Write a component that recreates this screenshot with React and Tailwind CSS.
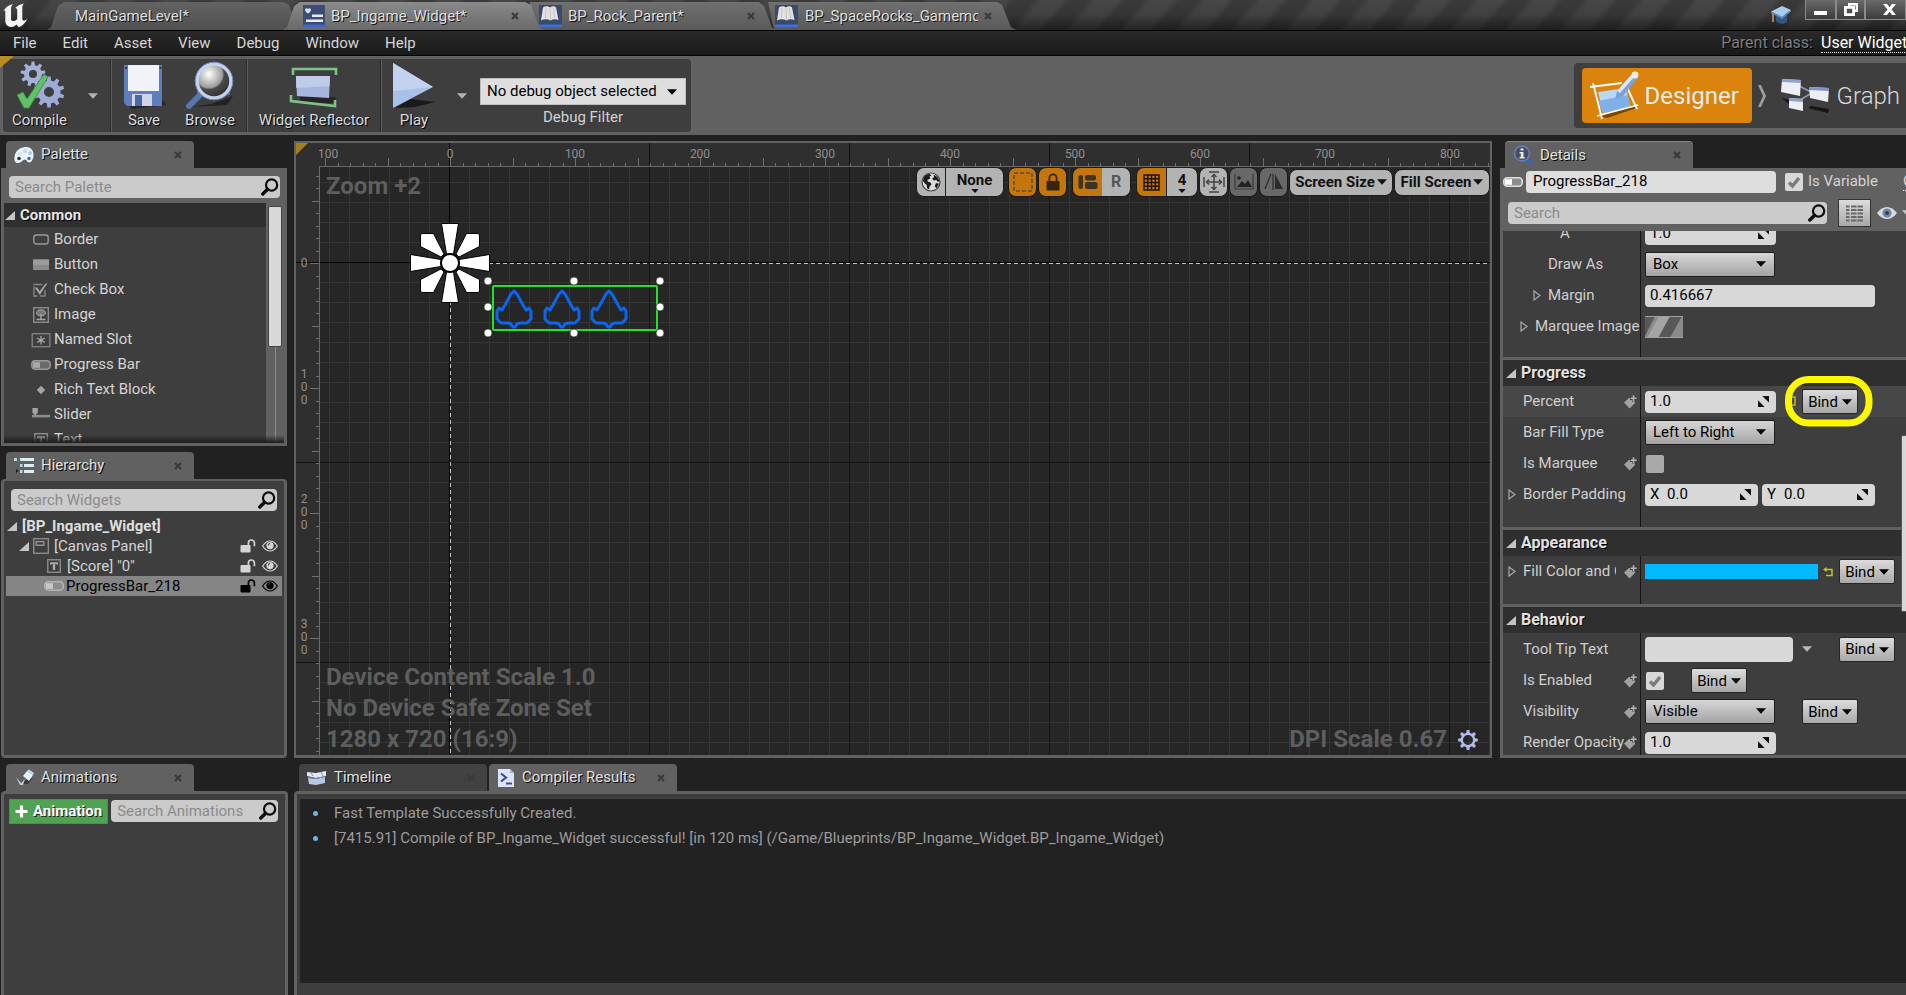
import React from "react";

const range = (n, from = 0) => Array.from({ length: n }, (_, i) => i + from);

/* ---------- small shared glyphs ---------- */

const Caret = ({ className = "" }) => (
  <svg viewBox="0 0 10 6" className={"h-[6px] w-[10px] shrink-0 fill-current " + className} aria-hidden="true">
    <path d="M0 0.3h10L5 5.8z" />
  </svg>
);

const Close = () => (
  <svg viewBox="0 0 8 8" className="h-2 w-2 text-[#3a3a3a]" aria-hidden="true">
    <path d="M1 1l6 6M7 1L1 7" stroke="currentColor" strokeWidth="2.2" />
  </svg>
);

const Expanded = ({ className = "" }) => (
  <svg viewBox="0 0 10 9" className={"h-[9px] w-[10px] shrink-0 fill-[#c4c4c4] " + className} aria-hidden="true">
    <path d="M10 0v9H0z" />
  </svg>
);

const Collapsed = () => (
  <svg viewBox="0 0 8 11" className="h-[11px] w-2 shrink-0" aria-hidden="true">
    <path d="M1 1l6 4.5L1 10z" fill="none" stroke="#a8a8a8" strokeWidth="1.2" />
  </svg>
);

const Magnifier = () => (
  <svg viewBox="0 0 18 18" className="h-[18px] w-[18px] shrink-0" aria-hidden="true">
    <circle cx="10.6" cy="7" r="5.6" fill="none" stroke="#0b0b0b" strokeWidth="2.2" />
    <path d="M6.6 11.2L1.8 16" stroke="#0b0b0b" strokeWidth="3.4" strokeLinecap="round" />
  </svg>
);

const Spin = () => (
  <svg viewBox="0 0 11 11" className="h-[11px] w-[11px] shrink-0 fill-[#111]" aria-hidden="true">
    <path d="M4.2 0H11v6.6zM0 4.2L6.6 11H0z" />
  </svg>
);

const KeyIcon = () => (
  <svg viewBox="0 0 13 14" className="h-[14px] w-[13px] shrink-0" aria-hidden="true">
    <path d="M0 7.500L5 3h3l3 3v2l-5.500 5.600z" fill="#a2a2a2" />
    <path d="M9.500 0v6.600M6.200 3.400h6.800" stroke="#3e3e3e" strokeWidth="3" />
    <path d="M9.500 0.300v6M6.700 3.300h6" stroke="#b4b4b4" strokeWidth="1.600" />
  </svg>
);

const gearPath = (teeth, rOut, rIn, cx, cy) => {
  const step = (Math.PI * 2) / teeth;
  const pt = (r, a) => (cx + r * Math.cos(a)).toFixed(2) + " " + (cy + r * Math.sin(a)).toFixed(2);
  return (
    range(teeth)
      .map((i) => {
        const a = i * step - Math.PI / 2;
        return [pt(rIn, a - step * 0.3), pt(rOut, a - step * 0.17), pt(rOut, a + step * 0.17), pt(rIn, a + step * 0.3)]
          .map((p, k) => (i === 0 && k === 0 ? "M" : "L") + p)
          .join("");
      })
      .join("") + "Z"
  );
};

const Eye = () => (
  <svg viewBox="0 0 16 12" className="h-3 w-4 shrink-0" aria-hidden="true">
    <path d="M0.6 6C3 2.4 5.4 1 8 1s5 1.4 7.4 5C13 9.6 10.6 11 8 11S3 9.6 0.6 6z" fill="none" stroke="currentColor" strokeWidth="1.2" />
    <circle cx="8" cy="5.6" r="3.6" fill="currentColor" />
    <path d="M6.3 5.4A1.9 1.9 0 0 1 8 3.5" fill="none" stroke="#3e3e3e" strokeWidth="1.1" />
  </svg>
);

const Unlock = () => (
  <svg viewBox="0 0 16 14" className="h-[14px] w-4 shrink-0" aria-hidden="true">
    <rect x="0.5" y="6" width="10" height="7.5" rx="1" fill="currentColor" />
    <path d="M8.4 6V4a3 3 0 0 1 6 0v3.2" fill="none" stroke="currentColor" strokeWidth="1.7" />
  </svg>
);

const ProgressIcon = ({ fill = "#6a6a6a", line = "#9a9a9a", bar = "#a8a8a8" }) => (
  <svg viewBox="0 0 20 10" className="h-[10px] w-5 shrink-0" aria-hidden="true">
    <rect x="0.8" y="0.8" width="18.4" height="8.4" rx="3.4" fill={fill} stroke={line} strokeWidth="1.6" />
    <path d="M2 2.2h7v5.6H2z" fill={bar} />
  </svg>
);

const TextIcon = () => (
  <svg viewBox="0 0 14 14" className="h-[14px] w-[14px] shrink-0" aria-hidden="true">
    <rect x="0.75" y="0.75" width="12.5" height="12.5" fill="none" stroke="#8c8c8c" strokeWidth="1.4" />
    <path d="M3 3.2h8v2.6H9.6V5H8.2v6H5.8V5H4.4v0.8H3z" fill="#a8a8a8" />
  </svg>
);

/* ---------- palette icons ---------- */

const paletteIcons = {
  Border: <rect x="2.8" y="5" width="14.4" height="9" rx="2.6" fill="none" stroke="#9a9a9a" strokeWidth="1.4" />,
  Button: (
    <>
      <rect x="2" y="4.5" width="16" height="10.5" fill="#8a8a8a" />
      <rect x="2" y="4.5" width="16" height="5.5" fill="#9c9c9c" />
    </>
  ),
  "Check Box": (
    <>
      <path d="M11.500 4.500H2.500M3 6.500v9.500h3.500M9 16h5v-6" fill="none" stroke="#858585" strokeWidth="1.400" />
      <path d="M3.800 7.600h2.600l2.200 3.600L14.600 3.600l1.800-.4L8.800 15z" fill="#a6a6a6" />
    </>
  ),
  Image: (
    <>
      <rect x="2.7" y="2.7" width="14.6" height="14.6" fill="none" stroke="#8c8c8c" strokeWidth="1.4" />
      <ellipse cx="10" cy="7.8" rx="4.4" ry="3" fill="#777" stroke="#a8a8a8" />
      <path d="M10 9v5M5.5 14.5h9" stroke="#a8a8a8" strokeWidth="1.3" />
    </>
  ),
  "Named Slot": (
    <>
      <rect x="1.2" y="3.7" width="17.6" height="13" fill="none" stroke="#858585" strokeWidth="1.3" />
      <path d="M10 6v8.4M6.2 8l7.6 4.4M13.8 8l-7.6 4.4" stroke="#a8a8a8" strokeWidth="1.3" />
    </>
  ),
  "Progress Bar": (
    <>
      <rect x="0.8" y="5.8" width="18.4" height="8.4" rx="3.4" fill="#6a6a6a" stroke="#9a9a9a" strokeWidth="1.4" />
      <path d="M2 7.2h7v5.6H2z" fill="#a8a8a8" />
    </>
  ),
  "Rich Text Block": <path d="M10 6.2L13.8 10 10 13.8 6.2 10z" fill="#a4a4a4" stroke="#a4a4a4" strokeWidth="0.8" strokeLinejoin="round" />,
  Slider: (
    <>
      <path d="M1 9.8h18v2.6H1z" fill="#8c8c8c" />
      <path d="M1.4 3h5.4v4.4L4.1 10.6 1.4 7.4z" fill="#a4a4a4" />
    </>
  ),
  Text: (
    <>
      <rect x="3.7" y="3.7" width="12.6" height="12.6" fill="none" stroke="#8c8c8c" strokeWidth="1.4" />
      <path d="M6 6.2h8v2.6h-1.4V8h-1.4v6H8.8V8H7.4v0.8H6z" fill="#a8a8a8" />
    </>
  ),
};

/* ---------- window chrome ---------- */

const WidgetTabIcon = () => (
  <svg viewBox="0 0 22 22" className="h-[22px] w-[22px] shrink-0" aria-hidden="true">
    <rect width="22" height="22" fill="#3b4d74" />
    <rect y="19.5" width="22" height="2.5" fill="#3f66c4" />
    <path d="M2 5c0-2 2.4-2.4 3-.8C5.600 2.600 8 3 8 5c0 1.600-3 3.600-3 3.600S2 6.600 2 5z" fill="#d9dde6" />
    <path d="M9 9.500h11v2.600H9zM3 14.500h17v2.600H3z" fill="#e8ebf2" />
  </svg>
);

const BookTabIcon = () => (
  <svg viewBox="0 0 23 22" className="h-[22px] w-[23px] shrink-0" aria-hidden="true">
    <rect width="23" height="22" fill="#3a4a6b" />
    <rect y="19.5" width="23" height="2.5" fill="#3f6fd8" />
    <path d="M4 2.500c2.500-1.800 5-1.600 7 0 2-1.600 4.500-1.800 6 0l2.500 12.500c-3-1.200-5.500-1-8 .6-3-1.600-6-1.600-9.500-.2z" fill="#e2e2e2" />
    <path d="M11 3l.5 12M7 3l-.6 10M14.500 3l1 10" stroke="#bcbcbc" strokeWidth="0.8" fill="none" />
  </svg>
);

function WindowTab({ label, icon, className, bodyClass, close = true }) {
  return (
    <div
      className={
        "relative flex h-[28px] items-center self-end text-[15px] text-[#dedede] [text-shadow:1px_1px_0_#111] " + className
      }
    >
      {icon}
      <a href="#" className={"flex-1 overflow-hidden whitespace-nowrap " + bodyClass}>
        {label}
      </a>
      {close && (
        <button type="button" aria-label={"Close " + label}>
          <Close />
        </button>
      )}
    </div>
  );
}

function TitleBar() {
  return (
    <header className="flex h-[31px] items-stretch overflow-hidden border-b border-black bg-[linear-gradient(to_bottom,rgba(0,0,0,0)_0%,rgba(0,0,0,0.1)_50%,rgba(0,0,0,0.5)_100%),repeating-linear-gradient(130deg,#474747_0px,#474747_16px,#3a3a3a_22px,#3a3a3a_36px,#474747_42px)]">
      <div className="flex w-[47px] shrink-0 items-center pl-[2px]">
        <svg viewBox="0 0 28 26" className="h-[26px] w-7" aria-label="Unreal Engine" role="img">
          <path
            d="M1 10C3 5.500 7 2.500 11 2.200 9.500 3.500 9 5 9 7v9.500c0 1.600.8 2.600 2.200 2.600 1.400 0 3-.9 4-2.200V8.500c0-1.500-.6-2.300-2-2.400C15.500 3.600 18.500 2.200 22 1.500c-1.200 1.200-1.700 2.600-1.700 4.500v10.500c0 1.400.6 2.200 1.600 2.200 1 0 2.200-.7 3.600-2.200-1.600 4-4.800 7.400-8.700 8.800l-2.400-2.800c-1.500 1.800-3.300 2.600-5.300 2.500-3.500-.2-5.800-2.600-5.800-6.200V9.500c0-1.500-1.300-1.300-2.300.5z"
            fill="#f4f4f4"
          />
        </svg>
      </div>
      <WindowTab
        label="MainGameLevel*"
        close={false}
        className="w-[253px] bg-linear-to-b from-[#636363] to-[#505050] pl-7 [clip-path:polygon(0_100%,4px_90%,11px_15%,17px_0,236px_0,242px_10%,250px_90%,100%_100%)]"
        bodyClass=""
      />
      <WindowTab
        label="BP_Ingame_Widget*"
        icon={<WidgetTabIcon />}
        className="z-20 -ml-[17px] w-[262px] bg-linear-to-b from-[#8b8b8b] to-[#696969] pr-[26px] pl-5 [clip-path:polygon(0_100%,4px_90%,11px_15%,17px_0,242px_0,248px_10%,256px_90%,100%_100%)]"
        bodyClass="pl-[6px]"
      />
      <WindowTab
        label="BP_Rock_Parent*"
        icon={<BookTabIcon />}
        className="z-10 -ml-[15px] w-[245px] bg-linear-to-b from-[#707070] to-[#5a5a5a] pr-5 pl-[9px] [clip-path:polygon(0_0,229px_0,234px_15%,242px_90%,100%_100%,0_100%)]"
        bodyClass="pl-[6px]"
      />
      <WindowTab
        label="BP_SpaceRocks_Gamemode"
        icon={<BookTabIcon />}
        className="-ml-[7px] w-[248px] bg-linear-to-b from-[#707070] to-[#5a5a5a] pr-6 pl-[7px] [clip-path:polygon(0_0,229px_0,234px_10%,243px_90%,100%_100%,6px_100%)]"
        bodyClass="mr-[6px] ml-[7px]"
      />
      <div className="flex flex-1 items-start justify-end">
        <svg viewBox="0 0 22 22" className="mt-[5px] mr-[13px] h-[22px] w-[22px]" aria-hidden="true">
          <path d="M6 10v6c2 3 8 4 11 1V9z" fill="#35567f" />
          <path d="M1 6.500L12 1l9 4-9 7z" fill="#a9cbee" />
          <path d="M12 12l9-7v1.500L12 14 1 8V6.500z" fill="#5f87b8" />
          <path d="M3 7.500V17" stroke="#c08a4e" strokeWidth="1.800" />
        </svg>
        {[
          ["Minimize", "w-[31px]", <path key="m" d="M4 11h13v4H4z" />],
          [
            "Restore",
            "w-[29px]",
            <path key="r" fillRule="evenodd" d="M8 3h10v9h-3v4H4V6h4zM10.500 5.500V6H15v3.500h.7v-4zM6.800 8.800v4.400h5.400V8.800z" />,
          ],
          ["Close", "w-[41px] pl-2", <path key="c" d="M4 4h4l2.500 3.200L13 4h4l-4.500 5.500L17 15h-4l-2.500-3.200L8 15H4l4.500-5.500z" />],
        ].map(([name, w, glyph]) => (
          <button
            key={name}
            type="button"
            aria-label={name}
            className={"flex h-5 items-center justify-center border border-t-0 border-[#8a8a8a] bg-linear-to-b from-[#6a6a6a] to-[#3c3c3c] " + w}
          >
            <svg viewBox="0 0 21 19" className="h-[19px] w-[21px] fill-white">
              {glyph}
            </svg>
          </button>
        ))}
      </div>
    </header>
  );
}

function MenuBar() {
  return (
    <nav className="flex h-[25px] items-center overflow-hidden border-b border-black bg-linear-to-b from-[#2a2a2a] to-[#191919] pl-[13px] text-[15px] text-[#d6d6d6]">
      <div className="flex flex-1 gap-[26px]">
        {["File", "Edit", "Asset", "View", "Debug", "Window", "Help"].map((m) => (
          <button key={m} type="button">
            {m}
          </button>
        ))}
      </div>
      <span className="text-base text-[#7d7d7d] [text-shadow:1px_1px_0_#000]">Parent class:</span>
      <div className="ml-2 w-[85px] overflow-hidden whitespace-nowrap">
        <a href="#" className="border-b border-dotted border-white text-base leading-5 text-white">
          User Widget
        </a>
      </div>
    </nav>
  );
}

/* ---------- tool bar ---------- */

const CompileIcon = () => (
  <svg viewBox="0 0 50 48" className="h-12 w-[50px]" aria-hidden="true">
    <path fillRule="evenodd" d={gearPath(9, 12.5, 9, 18, 13) + "M22 13a4 4 0 1 0-8 0 4 4 0 1 0 8 0z"} fill="#a3b1d8" />
    <path fillRule="evenodd" d={gearPath(10, 15.5, 11.5, 34, 31) + "M39 31a5 5 0 1 0-10 0 5 5 0 1 0 10 0z"} fill="#9dabd6" />
    <path d="M2 34l6-3 4 7L29 13l4 3-19 31H9z" fill="#62c069" stroke="#338a3c" strokeWidth="0.800" />
  </svg>
);

const SaveIcon = () => (
  <svg viewBox="0 0 44 48" className="h-12 w-11" aria-hidden="true">
    <path d="M6 42l36-2 2 4-34 4z" fill="#1c1c1c" opacity="0.700" />
    <path d="M2 4h38v41H5l-3-3z" fill="#5f7dbd" />
    <path d="M6 4h31v26H6z" fill="#f1f3f8" />
    <path d="M10 33h20v12H10z" fill="#cfd5e4" />
    <path d="M13 34h7v11h-7z" fill="#4a66a8" />
    <path d="M3 6h2v2H3zM37.500 6h2v2h-2z" fill="#263a6b" />
  </svg>
);

const BrowseIcon = () => (
  <svg viewBox="0 0 50 48" className="h-12 w-[50px]" aria-hidden="true">
    <defs>
      <radialGradient id="lens" cx="0.350" cy="0.300" r="0.800">
        <stop offset="0" stopColor="#ffffff" />
        <stop offset="0.500" stopColor="#9b9b9b" />
        <stop offset="0.560" stopColor="#4a4a4a" />
        <stop offset="1" stopColor="#2c2c2c" />
      </radialGradient>
    </defs>
    <path d="M12 14h33v20H12z" fill="#53709e" />
    <path d="M6 46l20-3 22-8-6 9z" fill="#1c1c1c" opacity="0.800" />
    <path d="M15 34L4 45" stroke="#5677ad" strokeWidth="6" strokeLinecap="round" />
    <circle cx="29" cy="20" r="17" fill="url(#lens)" stroke="#c5d2ea" strokeWidth="3.600" />
    <circle cx="29" cy="20" r="18.800" fill="none" stroke="#6f8cc0" strokeWidth="1" />
  </svg>
);

const ReflectorIcon = () => (
  <svg viewBox="0 0 52 48" className="h-12 w-[52px]" aria-hidden="true">
    <path d="M12 36h36l-2 6H12z" fill="#1c1c1c" opacity="0.700" />
    <path d="M5 14V8h43v6M3 34v6l44 5v-6" fill="none" stroke="#7cc487" strokeWidth="2.600" />
    <path d="M8 15h34l-1 22-32-2z" fill="#a6b7df" />
    <path d="M8 15h34l-.4 10-33.400 2z" fill="#bfcbe9" />
  </svg>
);

const PlayIcon = () => (
  <svg viewBox="0 0 46 48" className="h-12 w-[46px]" aria-hidden="true">
    <path d="M4 47l16-9 24 3-20 5z" fill="#1a1a1a" />
    <path d="M2 2l40 24L2 47z" fill="#a9c1e6" />
    <path d="M2 2l40 24L2 30z" fill="#c3d3ef" />
  </svg>
);

function ToolButton({ icon, label, className = "" }) {
  return (
    <button
      type="button"
      className={"flex flex-col items-center pt-[2px] text-[15px] leading-[18px] text-[#dcdcdc] [text-shadow:1px_1px_0_#000] " + className}
    >
      {icon}
      <span className="mt-[2px] whitespace-nowrap">{label}</span>
    </button>
  );
}

const ToolSplit = ({ className = "" }) => <div className={"h-[72px] w-[2px] shrink-0 border-l border-[#2a2a2a] bg-[#5c5c5c] " + className} />;

const DesignerIcon = () => (
  <svg viewBox="0 0 50 50" className="h-[50px] w-[50px] shrink-0" aria-hidden="true">
    <path d="M10 45l36-10 2 2-30 10z" fill="#7a4a00" />
    <path d="M9 21l28-4 4 19-27 6z" fill="#b9d6f6" />
    <path d="M9 30l30-6 2 12-27 6z" fill="#7fb0e8" />
    <path d="M1 16l32-4M4 12l9 36M8 45l41-11M36 12l12 26" stroke="#fff" strokeWidth="1.800" fill="none" />
    <path d="M26 29l2-9L43 3l6 4-15 18z" fill="#7aa3da" />
    <path d="M28 20L43 3l3 2-15 17z" fill="#dbe8fa" />
    <circle cx="46" cy="4" r="3.400" fill="#f6efe8" />
  </svg>
);

const GraphIcon = () => (
  <svg viewBox="0 0 50 36" className="h-9 w-[50px] shrink-0" aria-hidden="true">
    <path d="M31 28l18 3-1 4-20-5zM2 20l8 2v5z" fill="#151515" />
    <path d="M19 8l12 6M20 22l10-6" stroke="#8f98ad" strokeWidth="1.600" />
    <path d="M2 1l19 1-1 16-19-4z" fill="#eceef4" />
    <path d="M2 1l19 1v3L2 4z" fill="#8fa0cc" />
    <path d="M29 9l20 1-1 14-18-4z" fill="#eceef4" />
    <path d="M29 9l20 1v3l-20-1z" fill="#7f93c8" />
    <path d="M9 20l14 1v12L9 30z" fill="#eceef4" />
    <path d="M9 20l14 1v3L9 23z" fill="#8fa0cc" />
  </svg>
);

function ToolBar() {
  return (
    <div className="relative flex h-[79px] items-start overflow-hidden bg-[#616161]">
      <div className="mt-[3px] ml-[3px] flex h-[73px] items-start rounded bg-[#3e3e3e] pr-[5px]">
        <ToolButton icon={<CompileIcon />} label="Compile" className="ml-2 w-[57px]" />
        <button type="button" aria-label="Compile options" className="mt-[34px] ml-5 text-[#b4b4b4]">
          <Caret />
        </button>
        <ToolSplit className="ml-3" />
        <ToolButton icon={<SaveIcon />} label="Save" className="ml-[10px] w-11" />
        <ToolButton icon={<BrowseIcon />} label="Browse" className="ml-4 w-14" />
        <ToolSplit className="ml-2" />
        <ToolButton icon={<ReflectorIcon />} label="Widget Reflector" className="ml-2 w-[116px]" />
        <ToolSplit className="ml-2" />
        <ToolButton icon={<PlayIcon />} label="Play" className="ml-[5px] w-[54px]" />
        <button type="button" aria-label="Play options" className="mt-[34px] ml-4 text-[#b4b4b4]">
          <Caret />
        </button>
        <div className="mt-[19px] ml-[13px] flex flex-col items-center">
          <div className="relative">
            <select
              id="debug-object"
              className="h-[27px] w-[206px] appearance-none border border-[#bdbdbd] bg-[#dedede] pl-[6px] text-[15px] text-black"
            >
              <option>No debug object selected</option>
            </select>
            <Caret className="pointer-events-none absolute top-[11px] right-[9px] text-black" />
          </div>
          <label htmlFor="debug-object" className="mt-[3px] text-[15px] leading-[18px] text-[#d2d2d2]">
            Debug Filter
          </label>
        </div>
      </div>
      <div className="absolute top-0 left-0 h-3 w-[14px] bg-[#b58d22] [clip-path:polygon(0_0,100%_0,0_100%)]" />
      <div className="mt-[7px] ml-auto flex h-[65px] items-center rounded-l bg-[#3e3e3e] pr-[6px] pl-2">
        <button type="button" className="flex h-[55px] w-[170px] items-center gap-[6px] rounded-sm bg-[#da830d] pl-[7px] text-2xl text-[#ececec]">
          <DesignerIcon />
          Designer
        </button>
        <svg viewBox="0 0 10 24" className="ml-[5px] h-6 w-[10px]" aria-hidden="true">
          <path d="M1 1l3 0 5 11-5 11H1l5-11z" fill="#9c9c9c" />
        </svg>
        <button type="button" className="ml-[13px] flex items-center gap-[7px] text-2xl font-light text-[#d8d8d8]">
          <GraphIcon />
          Graph
        </button>
      </div>
    </div>
  );
}

/* ---------- docked panels ---------- */

function DockTab({ icon, label, className = "bg-[#616161]" }) {
  return (
    <div className={"flex h-[27px] w-[188px] shrink-0 items-center rounded-t-sm pr-3 pl-2 " + className}>
      {icon}
      <span className="ml-[7px] flex-1 text-[15px] text-[#e2e2e2] [text-shadow:1px_1px_0_#000]">{label}</span>
      <button type="button" aria-label={"Close " + label}>
        <Close />
      </button>
    </div>
  );
}

function SearchBox({ label, className = "" }) {
  return (
    <div className={"flex h-[22px] items-center rounded-sm bg-[#cbcbcb] pr-[1px] pl-[6px] " + className}>
      <input
        type="text"
        aria-label={label}
        placeholder={label}
        className="w-full min-w-0 flex-1 bg-transparent text-[15px] text-black outline-none placeholder:text-[#8b8b8b]"
      />
      <Magnifier />
    </div>
  );
}

const PaletteIcon = () => (
  <svg viewBox="0 0 20 18" className="h-[18px] w-5" aria-hidden="true">
    <path d="M9 1.500C15 0 19.500 3 19.500 9c0 4-2 7.500-4.500 7.500-2 0-2-3-4-3S7 17 4 17C1.500 17 0 15 .5 11.500 1 6 4 2.500 9 1.500z" fill="#eef4fb" />
    <circle cx="11" cy="5" r="2.200" fill="#b9dcf6" />
    <circle cx="16" cy="7" r="2" fill="#a6cdf0" />
    <circle cx="6" cy="8" r="2.200" fill="#cfe6f8" />
    <circle cx="5" cy="12.500" r="1.800" fill="#27333f" />
    <circle cx="15" cy="12.500" r="1.800" fill="#4a6f94" />
  </svg>
);

const HierarchyIcon = () => (
  <svg viewBox="0 0 20 17" className="h-[17px] w-5" aria-hidden="true">
    <path d="M6 1h14v3H6zM10 7h10v3H10zM10 13h10v3H10z" fill="#dcecf5" />
    <path d="M0 1h3v3H0zM6 7h2.500v3H6zM6 13h2.500v3H6z" fill="#b9d6e6" />
    <path d="M2 12l3 2-3 2z" fill="#222" />
  </svg>
);

const AnimIcon = () => (
  <svg viewBox="0 0 20 18" className="h-[18px] w-5" aria-hidden="true">
    <path d="M5 14l4-2 10-3-5 6H7z" fill="#3a3a3a" />
    <path d="M2 8l5 6 4-4-2 6H6z" fill="#b8cfd8" />
    <path d="M9 7l4-5 6 4-4 6z" fill="#e4f3fa" />
    <path d="M13 2l2-1.500L20 4l-1 2z" fill="#b9dcea" />
  </svg>
);

function PalettePanel() {
  return (
    <section className="flex min-h-0 flex-col px-[1px]">
      <DockTab icon={<PaletteIcon />} label="Palette" className="ml-[5px] bg-[#616161]" />
      <div className="relative flex min-h-0 flex-1 flex-col bg-[#616161] px-[3px] pt-2 pb-[3px]">
        <SearchBox label="Search Palette" className="mr-1 ml-[5px]" />
        <div className="mt-[5px] flex min-h-0 flex-1">
          <div className="min-w-0 flex-1 overflow-hidden bg-[#3e3e3e]">
            <h2 className="flex h-6 items-center bg-[#2f2f2f] pl-[1px] text-[15px] font-bold text-[#e6e6e6] [text-shadow:1px_1px_0_#000]">
              <Expanded className="mr-[5px]" />
              Common
            </h2>
            <ul>
              {Object.keys(paletteIcons).map((name) => (
                <li key={name} className="flex h-[25px] items-center gap-[3px] pl-[27px] text-[15px] text-[#d4d4d4]">
                  <svg viewBox="0 0 20 20" className="h-5 w-5 shrink-0" aria-hidden="true">
                    {paletteIcons[name]}
                  </svg>
                  {name}
                </li>
              ))}
            </ul>
          </div>
          <div className="flex w-[18px] flex-col items-center pt-[3px]">
            <div className="h-[141px] w-[14px] rounded-xs border border-[#454545] bg-[#d8d8d8]" />
            <div className="w-px flex-1 bg-[#8a8a8a]" />
          </div>
        </div>
        <div className="pointer-events-none absolute inset-x-[3px] bottom-[3px] h-2 bg-linear-to-t from-[#1c1c1c] to-transparent" />
      </div>
    </section>
  );
}

function HierarchyPanel() {
  const rowClass = "mx-[2px] flex h-5 items-center pr-1 text-[15px] ";
  const state = (
    <div className="ml-auto flex items-center gap-[6px]">
      <button type="button" aria-label="Toggle lock">
        <Unlock />
      </button>
      <button type="button" aria-label="Toggle visibility">
        <Eye />
      </button>
    </div>
  );
  return (
    <section className="flex min-h-0 flex-col px-[1px]">
      <DockTab icon={<HierarchyIcon />} label="Hierarchy" className="ml-[5px] bg-[#616161]" />
      <div className="min-h-0 flex-1 rounded-sm border-[3px] border-t-2 border-[#616161] bg-[#3e3e3e] pt-2">
        <SearchBox label="Search Widgets" className="mx-[7px] mb-[5px]" />
        <div className={rowClass + "pl-[1px] font-bold text-[#dedede]"}>
          <Expanded className="mr-[5px]" />
          [BP_Ingame_Widget]
        </div>
        <div className={rowClass + "pl-[13px] text-[#d4d4d4]"}>
          <Expanded className="mr-1" />
          <svg viewBox="0 0 16 16" className="mr-[5px] h-4 w-4" aria-hidden="true">
            <rect x="0.700" y="0.700" width="14.600" height="14.600" fill="none" stroke="#8c8c8c" strokeWidth="1.400" />
            <rect x="3.200" y="3.600" width="7.600" height="3.600" fill="none" stroke="#9c9c9c" strokeWidth="1.300" />
          </svg>
          [Canvas Panel]
          {state}
        </div>
        <div className={rowClass + "gap-[6px] pl-[41px] text-[#d4d4d4]"}>
          <TextIcon />
          [Score] "0"
          {state}
        </div>
        <div className={rowClass + "gap-[2px] bg-[#858585] pl-[38px] text-black"}>
          <ProgressIcon fill="#8d8d8d" line="#b4b4b4" bar="#c8c8c8" />
          ProgressBar_218
          {state}
        </div>
      </div>
    </section>
  );
}

function AnimationsPanel() {
  return (
    <section className="flex min-h-0 flex-col pl-[1px]">
      <DockTab icon={<AnimIcon />} label="Animations" className="ml-[5px] bg-[#616161]" />
      <div className="flex min-h-0 flex-1 items-start gap-[3px] rounded-t-sm border-[3px] border-b-0 border-[#616161] bg-[#3e3e3e] pt-[5px] pr-[7px] pl-[5px]">
        <button
          type="button"
          className="flex h-[25px] shrink-0 items-center gap-[5px] border border-[#3f9a44] bg-[#4fa352] px-[5px] text-[15px] font-bold text-white [text-shadow:1px_1px_0_#222]"
        >
          <svg viewBox="0 0 13 13" className="h-[13px] w-[13px]" aria-hidden="true">
            <path d="M6.500 0.500v12M0.500 6.500h12" stroke="#fff" strokeWidth="3.200" />
          </svg>
          Animation
        </button>
        <SearchBox label="Search Animations" className="mt-[1px] min-w-0 flex-1" />
      </div>
    </section>
  );
}

/* ---------- designer canvas ---------- */

const OX = 153;
const OY = 119;
const RULER = 23;

const Ship = ({ x }) => (
  <path
    d={`M${x} 148l3 3 6 11 3 5 3-2 2 3v8l-4 4h-7l-3 1-2 3h-2l-2-3-3-1h-7l-4-4v-8l2-3 3 2 3-5 6-11z`}
    fill="none"
    stroke="#0a66ee"
    strokeWidth="3"
    strokeLinejoin="round"
  />
);

function CanvasDrawing() {
  const cols = range(120, -7);
  const rows = range(80, -5);
  const ticksX = range(220, -10).map((i) => ({ i, x: OX + 1 + i * 12.5 }));
  const ticksY = range(120, -7).map((i) => ({ i, y: OY + 1 + i * 12.5 }));
  return (
    <svg className="absolute inset-0 h-full w-full" aria-hidden="true" fontFamily="Roboto, sans-serif">
      <g shapeRendering="crispEdges">
        {cols.map((i) => (
          <rect key={"c" + i} x={OX + i * 20} y={RULER} width="1" height="2000" fill="#363636" />
        ))}
        {rows.map((i) => (
          <rect key={"r" + i} x={RULER} y={OY + i * 20} width="3000" height="1" fill="#363636" />
        ))}
        <rect width="3000" height={RULER} fill="#2f2f2f" />
        <rect width={RULER} height="2000" fill="#2f2f2f" />
        {range(14).map((i) => (
          <rect key={"C" + i} x={OX + i * 200} width="1" height="2000" fill={i ? "#141414" : "#000"} />
        ))}
        {range(10).map((i) => (
          <rect key={"R" + i} y={OY + i * 200} width="3000" height="1" fill={i ? "#141414" : "#000"} />
        ))}
        <rect x={RULER} y={RULER} width="3000" height="1" fill="#6a6a6a" />
        <rect x={RULER} y={RULER} width="1" height="2000" fill="#6a6a6a" />
        {ticksX.map(({ i, x }) => {
          const h = i % 5 === 0 ? 8 : 3;
          return x > RULER && <rect key={"tx" + i} x={x} y={RULER - h} width="1" height={h} fill="#6f6f6f" />;
        })}
        {ticksY.map(({ i, y }) => {
          const w = i % 10 === 0 ? 9 : i % 5 === 0 ? 7 : 3;
          return y > RULER && <rect key={"ty" + i} x={RULER - w} y={y} width={w} height="1" fill="#6f6f6f" />;
        })}
      </g>
      <g fill="#8f8f8f" fontSize="12">
        <text x="22" y="15">100</text>
        {range(9).map((i) => (
          <text key={i} x={OX + 1 + i * 125} y="15" textAnchor="middle">
            {i * 100}
          </text>
        ))}
        <text x="8" y={OY + 5} textAnchor="middle">0</text>
        {range(3, 1).map((i) =>
          [i, 0, 0].map((d, k) => (
            <text key={i + "-" + k} x="8" y={OY + i * 125 - 9 + k * 13} textAnchor="middle">
              {d}
            </text>
          ))
        )}
      </g>
      <path d="M154.500 158V3000M193 120.500H3000" stroke="#c4c4c4" strokeWidth="1" strokeDasharray="4 3" fill="none" />
      <g transform={`translate(${OX + 1} ${OY + 1})`} fill="#fff" stroke="#000" strokeWidth="1">
        {[0, 90, 180, 270].map((a) => (
          <path key={a} transform={`rotate(${a})`} d="M-3.500-9L-8.500-39.500H8.500L3.500-9z" />
        ))}
        {[0, 90, 180, 270].map((a) => (
          <path key={"d" + a} transform={`rotate(${a})`} d="M6-9L16.500-29.500H28L29.500-28V-16.500L9-6z" />
        ))}
        <circle r="9" strokeWidth="2" />
      </g>
      <rect x="197" y="143" width="164" height="44" rx="1" fill="none" stroke="#22e02c" strokeWidth="2" />
      <Ship x={218} />
      <Ship x={266} />
      <Ship x={313} />
      {[192, 278, 364].map((x) =>
        [138, 164, 190].map((y) => x === 278 && y === 164 ? null : (
          <circle key={x + "-" + y} cx={x} cy={y} r="4" fill="#fff" stroke="#111" strokeWidth="0.600" />
        ))
      )}
    </svg>
  );
}

const chip = "flex items-center justify-center border border-[#1a1a1a] text-[#111] ";

function CanvasTools() {
  return (
    <div className="absolute top-6 right-0 flex items-center text-[15px] font-bold text-[#111]">
      <button type="button" aria-label="Localization preview" className={chip + "h-[30px] w-[30px] rounded-l-lg bg-[#b3b3b3]"}>
        <svg viewBox="0 0 20 20" className="h-5 w-5">
          <circle cx="10" cy="10" r="9" fill="#dcdcdc" stroke="#444" strokeWidth="1.200" />
          <path d="M2.500 5.500C4 3.500 6 2.200 8.500 2l2 1.500-2 1 .8 2-3 1.500.6 1.800 2.600.6 1 2-2 2 -.5 3-2-1.500-.3-3L3.500 11 2 9z" fill="#1c1c1c" />
          <path d="M12.500 2.500l4 2.500 2 4-1.500 1-1.800-2-2.600.6-1.300-2 1.800-1.500zM15 11l3 .8-2.300 4.200-2-1.500z" fill="#1c1c1c" />
        </svg>
      </button>
      <button type="button" className={chip + "-ml-px h-[30px] w-[59px] flex-col rounded-r-lg bg-[#b3b3b3] pt-[2px] leading-4"}>
        None
        <Caret className="scale-75" />
      </button>
      <button type="button" aria-label="Show outlines" className={chip + "ml-1 h-[30px] w-[29px] rounded-lg bg-[#c2760c]"}>
        <svg viewBox="0 0 20 20" className="h-5 w-5">
          <rect x="1" y="1" width="18" height="18" fill="none" stroke="#6b4a1a" strokeWidth="1.600" strokeDasharray="4 2" />
        </svg>
      </button>
      <button type="button" aria-label="Respect locks" className={chip + "ml-px h-[30px] w-[29px] rounded-lg bg-[#c2760c]"}>
        <svg viewBox="0 0 14 18" className="h-[18px] w-[14px]">
          <rect x="0.500" y="8" width="13" height="9.500" rx="1" fill="#38240a" />
          <path d="M3.400 8V5a3.600 3.600 0 0 1 7.200 0v3" fill="none" stroke="#38240a" strokeWidth="1.800" />
        </svg>
      </button>
      <button type="button" aria-label="Layout transform" className={chip + "ml-[5px] h-[30px] w-[30px] rounded-l-lg border-r-0 bg-[#c2760c]"}>
        <svg viewBox="0 0 20 16" className="h-4 w-5 fill-[#3d3325]">
          <rect x="0.500" y="1" width="4.500" height="14" rx="2" />
          <rect x="7" y="1" width="11" height="5.500" rx="2" />
          <rect x="7" y="8" width="12.500" height="7" rx="2" />
        </svg>
      </button>
      <button type="button" className={chip + "h-[30px] w-[29px] rounded-r-lg border-l-0 bg-[#b3b3b3] text-base"}>
        <span className="text-[#555]">R</span>
      </button>
      <button type="button" aria-label="Grid snapping" className={chip + "ml-[5px] h-[30px] w-[31px] rounded-l-lg bg-[#c2760c]"}>
        <svg viewBox="0 0 17 17" className="h-[17px] w-[17px]">
          <path
            d="M1 1h15v15H1zM1 4.750h15M1 8.500h15M1 12.250h15M4.750 1v15M8.500 1v15M12.250 1v15"
            fill="none"
            stroke="#1d1204"
            strokeWidth="1.400"
          />
        </svg>
      </button>
      <button type="button" className={chip + "-ml-px h-[30px] w-[32px] flex-col rounded-r-lg bg-[#b3b3b3] pt-[2px] leading-4"}>
        4
        <Caret className="scale-75" />
      </button>
      <button type="button" aria-label="Zoom to fit" className={chip + "ml-px h-[30px] w-[29px] rounded-lg bg-[#b3b3b3]"}>
        <svg viewBox="0 0 22 22" className="h-[22px] w-[22px]" fill="none" stroke="#444" strokeWidth="1.500">
          <path d="M6 1h10M6 21h10M1 6v10M21 6v10M11 3.500v15M3.500 11h15" />
          <path d="M8.500 6L11 3.500 13.500 6M8.500 16l2.500 2.500 2.500-2.500M6 8.500L3.500 11 6 13.500M16 8.500l2.500 2.500-2.500 2.500" />
        </svg>
      </button>
      <button type="button" aria-label="Background image" className={chip + "ml-px h-[30px] w-[29px] rounded-lg bg-[#686868]"}>
        <svg viewBox="0 0 20 16" className="h-4 w-5">
          <path d="M1 0v15h18V0" fill="none" stroke="#3a3a3a" strokeWidth="1.200" />
          <path d="M3 13l5-6 3 3 3-4 4 7z" fill="#222" />
          <circle cx="5" cy="4" r="1.800" fill="#222" />
        </svg>
      </button>
      <button type="button" aria-label="Flip preview" className={chip + "ml-px h-[30px] w-[29px] rounded-lg bg-[#686868]"}>
        <svg viewBox="0 0 20 18" className="h-[18px] w-5">
          <path d="M11 1v15h8z" fill="#2c2c2c" />
          <path d="M9 1v16M7 1L1 16" stroke="#2c2c2c" strokeWidth="1.200" />
        </svg>
      </button>
      <button type="button" className={chip + "ml-px h-[27px] w-[104px] gap-[2px] rounded-lg bg-[#b3b3b3] whitespace-nowrap"}>
        Screen Size
        <Caret />
      </button>
      <button type="button" className={chip + "ml-px h-[27px] w-[96px] gap-[2px] rounded-lg bg-[#b3b3b3] whitespace-nowrap"}>
        Fill Screen
        <Caret />
      </button>
    </div>
  );
}

function DesignerCanvas() {
  return (
    <section className="relative min-h-0 min-w-0 overflow-hidden border-2 border-b-[3px] border-[#616161] bg-[#262626]">
      <CanvasDrawing />
      <div className="absolute top-0 left-0 h-3 w-3 bg-[#a68020] [clip-path:polygon(0_0,100%_0,0_100%)]" />
      <div className="absolute inset-0 flex flex-col justify-between pr-3 pl-[30px] text-2xl font-bold text-[#5e5e5e]">
        <p className="mt-7 leading-[31px]">Zoom +2</p>
        <div className="flex items-end justify-between leading-[31px]">
          <p>
            Device Content Scale 1.0
            <br />
            No Device Safe Zone Set
            <br />
            1280 x 720 (16:9)
          </p>
          <div className="flex items-center gap-[11px]">
            DPI Scale 0.67
            <button type="button" aria-label="DPI settings">
              <svg viewBox="0 0 20 20" className="h-5 w-5">
                <path
                  fillRule="evenodd"
                  d={gearPath(8, 10, 7.4, 10, 10) + "M15 10a5 5 0 1 0-10 0 5 5 0 1 0 10 0z"}
                  fill="#aebce8"
                />
              </svg>
            </button>
          </div>
        </div>
      </div>
      <CanvasTools />
    </section>
  );
}

/* ---------- details ---------- */

const DetailsIcon = () => (
  <svg viewBox="0 0 20 20" className="h-5 w-5" aria-hidden="true">
    <path d="M13 13l6 6" stroke="#3f62b0" strokeWidth="3.400" />
    <circle cx="9" cy="8.500" r="7.400" fill="#4a4e5a" stroke="#5d7fc4" strokeWidth="1.600" />
    <path d="M7.500 3.600h3v2h-3zM6.500 7h4v5h1.200v1.400H6.500V12h1.300V8.400H6.500z" fill="#e8e8e8" />
  </svg>
);

function DropDown({ label, value, className = "w-[130px]" }) {
  return (
    <div className={"relative " + className}>
      <select
        aria-label={label}
        className="block h-[25px] w-full appearance-none rounded-xs border border-[#1e1e1e] bg-linear-to-b from-[#d6d6d6] to-[#a4a4a4] pl-[7px] text-[15px] text-black"
      >
        <option>{value}</option>
      </select>
      <Caret className="pointer-events-none absolute top-[9px] right-[9px] text-black" />
    </div>
  );
}

function NumberBox({ label, value, prefix, className = "w-[131px]", spin = true }) {
  return (
    <div className={"flex h-[22px] items-center rounded-sm bg-[#d8d8d8] pr-[7px] pl-[5px] text-[15px] text-black " + className}>
      {prefix && <span className="w-[17px]">{prefix}</span>}
      <input type="text" aria-label={label} defaultValue={value} className="w-full min-w-0 flex-1 bg-transparent outline-none" />
      {spin && <Spin />}
    </div>
  );
}

function Bind({ className = "" }) {
  return (
    <button
      type="button"
      className={
        "flex h-[25px] w-14 items-center justify-center gap-1 rounded-xs border border-[#262626] bg-linear-to-b from-[#dcdcdc] to-[#a8a8a8] pt-[1px] text-[15px] text-black " +
        className
      }
    >
      Bind
      <Caret />
    </button>
  );
}

function Tick({ label, checked }) {
  return (
    <div className="relative ml-[1px] h-[18px] w-[18px]">
      <input
        type="checkbox"
        aria-label={label}
        defaultChecked={checked}
        className="peer block h-[18px] w-[18px] appearance-none rounded-xs bg-[#a9a9a9] checked:bg-[#d8d8d8]"
      />
      <svg viewBox="0 0 18 18" className="pointer-events-none absolute inset-0 hidden h-[18px] w-[18px] peer-checked:block">
        <path d="M4 9.500l3.500 3.500L14 5" fill="none" stroke="#7b7b7b" strokeWidth="3.400" />
      </svg>
    </div>
  );
}

function Row({ label, indent = "pl-5", arrow, keyed, hover, height = "h-[31px]", labelClass = "", children }) {
  return (
    <div className={"flex shrink-0 " + height + (hover ? " bg-[#474747]" : "")}>
      <div
        className={
          "flex w-[138px] shrink-0 items-center border-r border-[#161616] text-[15px] text-[#cfcfcf] " + indent + (keyed ? " pr-[3px]" : "")
        }
      >
        {arrow && (
          <button type="button" aria-label={"Expand " + label} className="-ml-[15px] w-[15px]">
            <Collapsed />
          </button>
        )}
        <span className={"min-w-0 flex-1 overflow-hidden whitespace-nowrap " + labelClass}>{label}</span>
        {keyed && <KeyIcon />}
      </div>
      <div className="flex flex-1 items-center pl-1">{children}</div>
    </div>
  );
}

const Section = ({ title }) => (
  <h2 className="flex h-[26px] shrink-0 items-center bg-[#2f2f2f] pl-[3px] text-base font-bold text-[#e2e2e2] [text-shadow:1px_1px_0_#000]">
    <Expanded className="mr-[5px]" />
    {title}
  </h2>
);

const Filler = ({ className }) => (
  <div className={"shrink-0 border-b-[3px] border-[#616161] " + className}>
    <div className="h-full w-[138px] border-r border-[#161616]" />
  </div>
);

function DetailsPanel() {
  return (
    <section className="flex min-h-0 min-w-0 flex-col overflow-hidden">
      <DockTab icon={<DetailsIcon />} label="Details" className="ml-[5px] border-t border-[#a68a2c] bg-[#616161]" />
      <div className="relative flex min-h-0 flex-1 flex-col bg-[#616161] pb-[3px] pl-[3px]">
        <div className="flex h-[27px] items-center overflow-hidden">
          <ProgressIcon fill="#8d8d8d" line="#e0e0e0" bar="#ffffff" />
          <input
            type="text"
            aria-label="Widget name"
            defaultValue="ProgressBar_218"
            className="ml-[3px] h-[22px] w-[250px] shrink-0 rounded-sm bg-[#dedede] pl-[7px] text-[15px] text-black outline-none"
          />
          <div className="ml-2 shrink-0">
            <Tick label="Is Variable" checked />
          </div>
          <span className="ml-[5px] w-[74px] shrink-0 text-[15px] whitespace-nowrap text-[#d4d4d4]">Is Variable</span>
          <a href="#" className="ml-[21px] shrink-0 border-b border-dotted border-white text-[15px] leading-[18px] text-[#d4d4d4]">
            Open
          </a>
        </div>
        <div className="flex h-9 items-center overflow-hidden">
          <SearchBox label="Search" className="ml-[5px] w-[319px] shrink-0" />
          <button
            type="button"
            aria-label="Property matrix"
            className="ml-[11px] flex h-7 w-[33px] shrink-0 items-center justify-center border border-[#333] bg-linear-to-b from-[#dcdcdc] to-[#a8a8a8]"
          >
            <svg viewBox="0 0 17 17" className="h-[17px] w-[17px]">
              <path
                d="M0 1.500h3.500M0 5h3.500M0 8.500h3.500M0 12h3.500M0 15.500h3.500M5 1.500h12M5 5h12M5 8.500h12M5 12h12M5 15.500h12"
                stroke="#6a6a6a"
                strokeWidth="1.800"
                strokeDasharray="5.500 1"
              />
            </svg>
          </button>
          <button type="button" aria-label="View options" className="ml-[5px] flex shrink-0 items-center gap-1 text-[#c8c8c8]">
            <svg viewBox="0 0 22 14" className="h-[14px] w-[22px]">
              <path d="M1 7c3-4 6.500-6 10-6s7 2 10 6c-3 4-6.500 6-10 6S4 11 1 7z" fill="#dadada" />
              <circle cx="11" cy="7" r="4.600" fill="#6f87ad" />
              <circle cx="11" cy="7" r="2" fill="#33415c" />
            </svg>
            <Caret />
          </button>
        </div>
        <div className="relative flex min-h-0 flex-1 flex-col overflow-hidden bg-[#3e3e3e]">
          <div className="-mt-[13px] flex flex-col">
            <Row label="A" indent="pl-[57px]">
              <NumberBox label="Tint alpha" value="1.0" />
            </Row>
            <Row label="Draw As" indent="pl-[45px]">
              <DropDown label="Draw As" value="Box" />
            </Row>
            <Row label="Margin" indent="pl-[45px]" arrow>
              <NumberBox label="Margin" value="0.416667" className="w-[230px]" spin={false} />
            </Row>
            <Row label="Marquee Image" indent="pl-8" arrow>
              <svg viewBox="0 0 38 22" className="h-[22px] w-[38px]" aria-hidden="true">
                <rect width="38" height="22" fill="#8a8a8a" />
                <path d="M0 0h10L0 20zM25 0h12L25 22H13z" fill="#585858" />
                <path d="M14 0h11L13 22H2z" fill="#a4a4a4" />
                <path d="M0 0.500h38M0 21.500h38" stroke="#a0a0a0" />
              </svg>
            </Row>
            <Filler className="h-[18px]" />
          </div>
          <Section title="Progress" />
          <Row label="Percent" keyed hover>
            <NumberBox label="Percent" value="1.0" />
            <div className="relative ml-[26px]">
              <Bind />
              <svg
                viewBox="0 0 88 51"
                className="pointer-events-none absolute -top-[13px] -left-[17px] h-[51px] w-[88px] max-w-none"
                aria-hidden="true"
              >
                <path d="M6 21h4v8H6" fill="none" stroke="#b8b423" strokeWidth="1.600" />
                <rect x="3.500" y="3.500" width="80.500" height="43.500" rx="20" fill="none" stroke="#fdf800" strokeWidth="7" />
              </svg>
            </div>
          </Row>
          <Row label="Bar Fill Type">
            <DropDown label="Bar Fill Type" value="Left to Right" />
          </Row>
          <Row label="Is Marquee" keyed>
            <Tick label="Is Marquee" />
          </Row>
          <Row label="Border Padding" arrow>
            <NumberBox label="Border padding X" prefix="X" value="0.0" className="w-[113px]" />
            <NumberBox label="Border padding Y" prefix="Y" value="0.0" className="ml-1 w-[113px]" />
          </Row>
          <Filler className="h-5" />
          <Section title="Appearance" />
          <Row label="Fill Color and Opacity" arrow keyed labelClass="mr-2">
            <button type="button" aria-label="Fill color" className="h-[15px] w-[173px] bg-[#00b9ff]" />
            <button type="button" aria-label="Reset to default" className="ml-[5px]">
              <svg viewBox="0 0 10 10" className="h-[10px] w-[10px]">
                <path d="M2 2.500h7v6H3" fill="none" stroke="#c9c22b" strokeWidth="1.500" />
                <path d="M0 2.500L3.600 0v5z" fill="#c9c22b" />
              </svg>
            </button>
            <Bind className="ml-[6px]" />
          </Row>
          <Filler className="h-5" />
          <Section title="Behavior" />
          <Row label="Tool Tip Text" height="h-8">
            <input type="text" aria-label="Tool Tip Text" className="h-[25px] w-[148px] rounded-sm bg-[#d8d8d8] px-[5px] text-[15px] text-black outline-none" />
            <button type="button" aria-label="Tool tip options" className="ml-[9px] text-[#b8b8b8]">
              <Caret />
            </button>
            <Bind className="ml-[27px]" />
          </Row>
          <Row label="Is Enabled" keyed>
            <Tick label="Is Enabled" checked />
            <Bind className="ml-[27px]" />
          </Row>
          <Row label="Visibility" keyed>
            <DropDown label="Visibility" value="Visible" />
            <Bind className="ml-[27px]" />
          </Row>
          <Row label="Render Opacity" keyed>
            <NumberBox label="Render Opacity" value="1.0" />
          </Row>
        </div>
        <div className="absolute top-[267px] right-0 h-[177px] w-[5px] rounded-l-xs border border-r-0 border-[#555] bg-[#d8d8d8]" />
      </div>
    </section>
  );
}

/* ---------- results ---------- */

const TimelineIcon = () => (
  <svg viewBox="0 0 20 16" className="h-4 w-5" aria-hidden="true">
    <path d="M0 2l9 1 10-2v5L9 8 0 6z" fill="#dfe9f6" />
    <path d="M1 8l8 1 9-2v6l-9 2-7-1z" fill="#b7c9e2" />
    <path d="M4 3l2 3M14 2l2 4M1 7.500l8 1 9-2" stroke="#7f93b4" strokeWidth="1" fill="none" />
  </svg>
);

const CompilerIcon = () => (
  <svg viewBox="0 0 18 20" className="h-5 w-[18px]" aria-hidden="true">
    <path d="M1 1h12l4 4v14H1z" fill="#dbe4f6" />
    <path d="M13 1v4h4z" fill="#9fb1d8" />
    <path d="M4 5.500l5 4-5 4" fill="none" stroke="#3a4f88" strokeWidth="2.200" />
    <path d="M9 15.500h6" stroke="#3a4f88" strokeWidth="2" />
  </svg>
);

function ResultsPanel() {
  return (
    <section className="flex min-h-0 min-w-0 flex-col">
      <div className="flex gap-[2px] pl-[5px]">
        <DockTab icon={<TimelineIcon />} label="Timeline" className="bg-[#424242]" />
        <DockTab icon={<CompilerIcon />} label="Compiler Results" className="bg-[#616161]" />
      </div>
      <div className="flex min-h-0 flex-1 flex-col rounded-tl-sm border-t-[3px] border-l-[3px] border-[#616161] bg-[#3e3e3e] pt-[5px] pb-3 pl-[3px]">
        <ul className="flex-1 bg-[#222] pt-[2px] pl-[13px] text-[15px] leading-[25px] text-[#9c9c9c]">
          {[
            "Fast Template Successfully Created.",
            "[7415.91] Compile of BP_Ingame_Widget successful! [in 120 ms] (/Game/Blueprints/BP_Ingame_Widget.BP_Ingame_Widget)",
          ].map((line) => (
            <li key={line} className="flex items-center gap-4">
              <span className="h-[5px] w-[5px] rounded-full bg-[#6fb4e6]" />
              {line}
            </li>
          ))}
        </ul>
      </div>
    </section>
  );
}

export default function App() {
  return (
    <div className="flex h-screen min-h-[700px] flex-col overflow-hidden bg-[#212121] font-['Roboto',sans-serif]">
      <TitleBar />
      <MenuBar />
      <ToolBar />
      <main className="grid min-h-0 flex-1 grid-cols-[288px_minmax(0,1fr)] gap-x-[6px] pt-[6px]">
        <div className="grid min-h-0 grid-rows-[minmax(0,305fr)_minmax(0,306fr)_minmax(0,231fr)] gap-y-[6px]">
          <PalettePanel />
          <HierarchyPanel />
          <AnimationsPanel />
        </div>
        <div className="grid min-h-0 grid-rows-[minmax(0,617fr)_minmax(0,231fr)] gap-y-[6px]">
          <div className="grid min-h-0 grid-cols-[minmax(0,1fr)_406px] gap-x-2">
            <DesignerCanvas />
            <DetailsPanel />
          </div>
          <ResultsPanel />
        </div>
      </main>
    </div>
  );
}
